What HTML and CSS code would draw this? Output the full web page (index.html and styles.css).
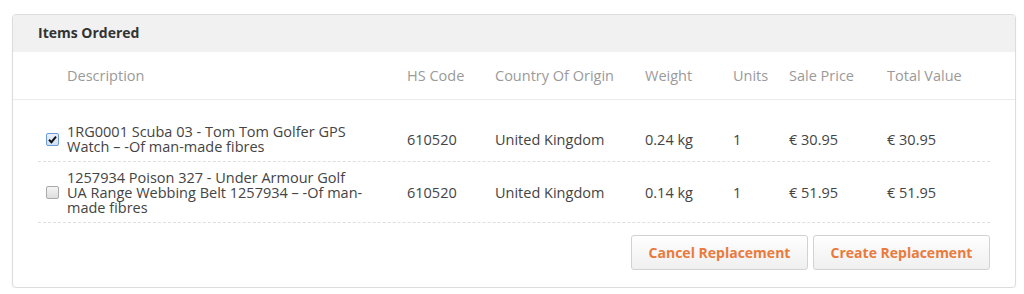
FILE: index.html
```html
<!DOCTYPE html>
<html lang="en">
<head>
  <meta charset="UTF-8" />
  <title>Items Ordered</title>
  <link rel="stylesheet" href="styles.css">
</head>
<body>
  <div class="panel">
    <div class="panel-head">Items Ordered</div>

    <div class="cols">
      <span></span>
      <span>Description</span>
      <span>HS Code</span>
      <span>Country Of Origin</span>
      <span>Weight</span>
      <span>Units</span>
      <span>Sale Price</span>
      <span>Total Value</span>
    </div>

    <div class="rows">
      <div class="row">
        <span class="check checked">
          <svg width="9" height="9" viewBox="0 0 9 9"><path d="M1 4.8 L3.4 7.2 L8 1.6" fill="none" stroke="#111" stroke-width="2"/></svg>
        </span>
        <span class="desc">1RG0001 Scuba 03 - Tom Tom Golfer GPS Watch – -Of man-made fibres</span>
        <span>610520</span>
        <span>United Kingdom</span>
        <span>0.24 kg</span>
        <span>1</span>
        <span>€ 30.95</span>
        <span>€ 30.95</span>
      </div>
      <div class="row">
        <span class="check"></span>
        <span class="desc">1257934 Poison 327 - Under Armour Golf UA Range Webbing Belt 1257934 – -Of man-made fibres</span>
        <span>610520</span>
        <span>United Kingdom</span>
        <span>0.14 kg</span>
        <span>1</span>
        <span>€ 51.95</span>
        <span>€ 51.95</span>
      </div>
    </div>

    <div class="actions">
      <button>Cancel Replacement</button>
      <button>Create Replacement</button>
    </div>
  </div>
</body>
</html>
```

FILE: styles.css
```css
body {
  margin: 0;
  padding: 14px 8px 0 12px;
  background: #fff;
  font-family: 'Open Sans', sans-serif;
  font-size: 14.5px;
  color: #444;
}

.panel {
  border: 1px solid #dcdcdc;
  border-radius: 4px;
  box-shadow: 0 1px 2px rgba(0, 0, 0, 0.06);
  overflow: hidden;
}

.panel-head {
  background: #f1f1f1;
  height: 37px;
  line-height: 36px;
  padding: 0 25px;
  font-weight: 700;
  font-size: 14px;
  color: #333;
}

.cols, .row {
  display: grid;
  grid-template-columns: 29px 340px 88px 150px 88px 56px 98px 1fr;
  align-items: center;
}

.cols {
  height: 47px;
  padding: 0 25px;
  border-bottom: 1px solid #ebebeb;
  color: #9a9a9a;
}

.rows {
  padding: 16px 25px 0;
}

.row {
  padding: 8px 0 7px;
  border-bottom: 1px dashed #dedede;
}

.desc {
  max-width: 301px;
  line-height: 15px;
  color: #444;
}

.check {
  width: 11px;
  height: 11px;
  margin-left: 8px;
  border: 1px solid #a9a9a9;
  border-radius: 2px;
  background: linear-gradient(#f4f4f4, #dedede);
  display: flex;
  align-items: center;
  justify-content: center;
}

.check.checked {
  border-color: #6b9bd6;
  background: linear-gradient(#e9f1fb, #cfdff3);
}

.actions {
  display: flex;
  justify-content: flex-end;
  gap: 5px;
  padding: 12px 25px 17px;
}

button {
  width: 177px;
  height: 35px;
  border: 1px solid #d2d2d2;
  border-radius: 3px;
  background: linear-gradient(#ffffff, #efefef);
  color: #ea7a3c;
  font-family: 'Open Sans', sans-serif;
  font-size: 14px;
  font-weight: 700;
  cursor: pointer;
}
```
